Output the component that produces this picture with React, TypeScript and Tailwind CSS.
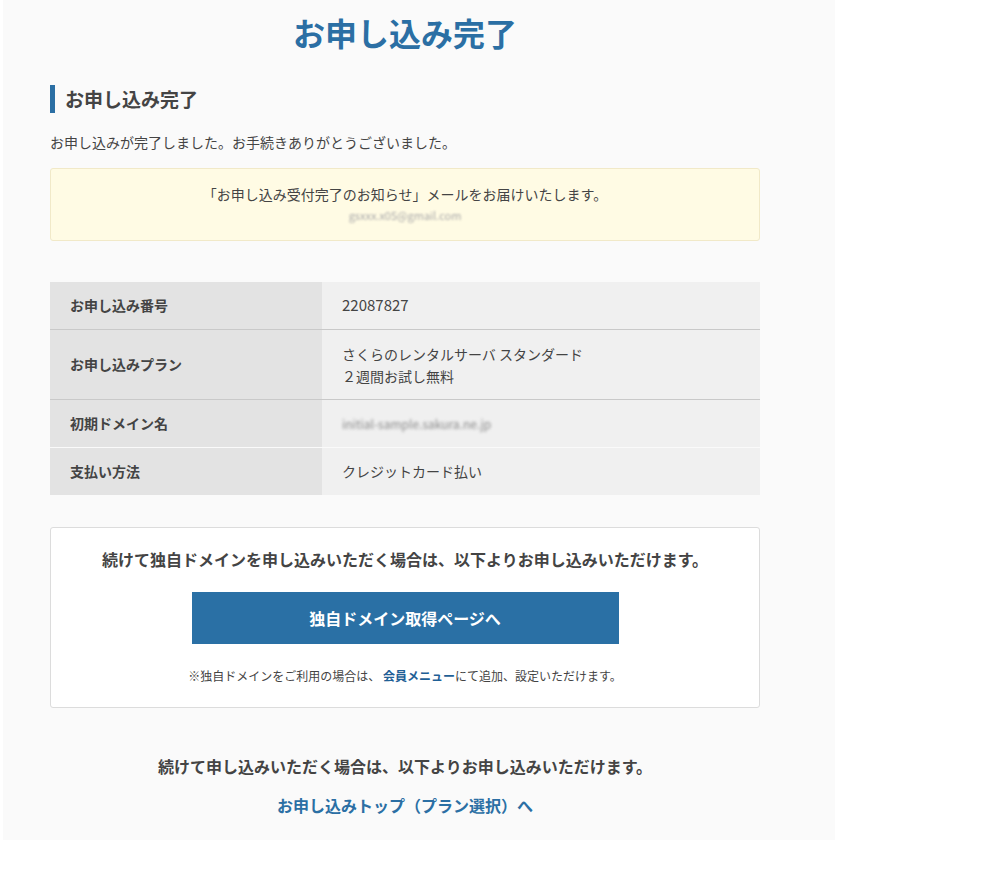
const rows = [
	{ label: "お申し込み番号", h: "h-[47px]", line: "border-b border-[#c9c9c9]" },
	{ label: "お申し込みプラン", h: "h-[69px]", line: "border-b border-[#c9c9c9]" },
	{ label: "初期ドメイン名", h: "h-[47px]", line: "border-b border-[#fafafa]" },
	{ label: "支払い方法", h: "h-[47px]", line: "" },
]

const Value = ({ i }: { i: number }) => {
	if (i === 0) return <span className="text-[15px]">22087827</span>
	if (i === 1)
		return (
			<div className="leading-[22px]">
				<div>さくらのレンタルサーバ スタンダード</div>
				<div>２週間お試し無料</div>
			</div>
		)
	if (i === 2) return <span className="blur-[1.4px] text-[#8a8a8a] text-[12px]">initial-sample.sakura.ne.jp</span>
	return <span>クレジットカード払い</span>
}

const App = () => {
	return (
		<div className="min-h-screen bg-white font-['Noto_Sans_CJK_JP',sans-serif] text-[#333]">
			<div className="ml-[3px] w-[832px] bg-[#fafafa] pl-[47px] pr-[75px] pt-[10px] pb-[23px]">
				<h1 className="text-center text-[32px] leading-[44px] font-bold text-[#2b6fa4]">お申し込み完了</h1>

				<h2 className="mt-[31px] h-[28px] border-l-[5px] border-[#2b6fa4] pl-[10px] text-[19px] leading-[28px] font-bold text-[#444]">お申し込み完了</h2>

				<p className="mt-[19px] text-[14px] leading-[20px] text-[#444]">お申し込みが完了しました。お手続きありがとうございました。</p>

				<div className="mt-[16px] rounded-[3px] border border-[#f1e9c8] bg-[#fffbe4] pt-[14px] pb-[15px] text-center">
					<p className="text-[14px] leading-[22px] text-[#444]">「お申し込み受付完了のお知らせ」メールをお届けいたします。</p>
					<p className="text-[11px] leading-[20px] text-[#aaa] blur-[1.3px]">gsxxx.x05@gmail.com</p>
				</div>

				<div className="mt-[41px]">
					{rows.map((r, i) => (
						<div key={r.label} className={`flex ${r.line}`}>
							<div className={`w-[272px] ${r.h} flex items-center bg-[#e3e3e3] pl-[20px] text-[14px] font-bold text-[#444]`}>{r.label}</div>
							<div className={`flex-1 ${r.h} flex items-center bg-[#f0f0f0] pl-[20px] text-[14px] text-[#444]`}>
								<Value i={i} />
							</div>
						</div>
					))}
				</div>

				<div className="mt-[32px] rounded-[3px] border border-[#dcdcdc] bg-white pt-[19px] pb-[22px] text-center">
					<p className="text-[16px] leading-[24px] font-bold text-[#444]">続けて独自ドメインを申し込みいただく場合は、以下よりお申し込みいただけます。</p>
					<div className="mt-[21px] flex justify-center">
						<a className="flex h-[52px] w-[427px] items-center justify-center bg-[#2a70a5] text-[16px] font-bold text-white">独自ドメイン取得ページへ</a>
					</div>
					<p className="mt-[23px] text-[12px] leading-[18px] text-[#444]">
						※独自ドメインをご利用の場合は、 <a className="font-bold text-[#1f6096]">会員メニュー</a>にて追加、設定いただけます。
					</p>
				</div>

				<p className="mt-[46px] text-center text-[16px] leading-[24px] font-bold text-[#444]">続けて申し込みいただく場合は、以下よりお申し込みいただけます。</p>
				<p className="mt-[15px] text-center text-[16px] leading-[24px] font-bold">
					<a className="text-[#2b6fa4]">お申し込みトップ（プラン選択）へ</a>
				</p>
			</div>
		</div>
	)
}

export default App
